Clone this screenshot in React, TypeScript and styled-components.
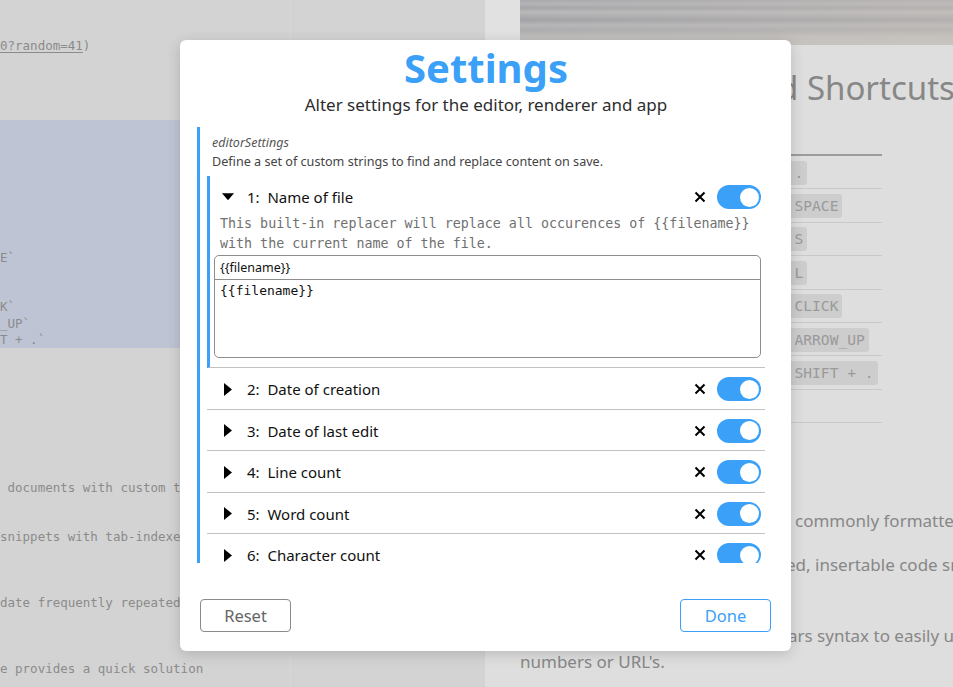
import React from "react";
import styled, { createGlobalStyle } from "styled-components";

const SANS = `"Noto Sans", "Open Sans", sans-serif`;
const MONO = `"DejaVu Sans Mono", "Liberation Mono", monospace`;
const BLUE = "#3aa0f8";

const GlobalStyle = createGlobalStyle`
  html, body { margin: 0; padding: 0; }
  body { font-family: ${SANS}; overflow: hidden; background: #d3d3d3; }
  * { box-sizing: border-box; }
`;

const Page = styled.div`
  position: relative;
  display: flex;
  width: 953px;
  height: 687px;
  overflow: hidden;
`;

/* ---------- left (editor) pane ---------- */
const LeftPane = styled.div`
  width: 485px;
  flex: none;
  padding-top: 37.5px;
  background:
    linear-gradient(to right, transparent 290px, #d7d7d7 290px, #d7d7d7 291px, transparent 291px),
    #d3d3d3;
  font-family: ${MONO};
  font-size: 12.5px;
  line-height: 16.5px;
  color: #8b8b8b;
  white-space: pre;
`;

const CodeLine = styled.div<{ $mt?: number }>`
  height: 16.5px;
  margin-top: ${(p) => p.$mt ?? 0}px;
`;

const Link = styled.span`
  text-decoration: underline;
  text-underline-offset: 2px;
`;

const Selection = styled.div`
  margin-top: 66px;
  height: 228px;
  padding-top: 129.5px;
  background: #bfc4d4;
`;

/* ---------- right (preview) pane ---------- */
const RightPane = styled.div`
  flex: 1;
  min-width: 0;
  background: #dedede;
  display: flex;
  flex-direction: column;
  overflow: hidden;
`;

const Banner = styled.div`
  height: 45px;
  display: flex;
  flex: none;
`;

const BannerGap = styled.div`
  width: 35px;
  background: #e1e1e1;
`;

const BannerImage = styled.div`
  flex: 1;
  background:
    linear-gradient(to right, rgba(255, 250, 240, 0) 0%, rgba(210, 200, 190, 0.35) 100%),
    linear-gradient(
      to bottom,
      #a9a9ac 0px,
      #b4b4b6 4px,
      #a5a5a9 8px,
      #b9b9ba 12px,
      #aeaeb1 16px,
      #a2a2a6 20px,
      #b6b6b7 25px,
      #acacaf 30px,
      #bebdbc 36px,
      #c3c2c0 45px
    );
`;

const Preview = styled.div`
  padding-left: 35px;
  color: #878787;
`;

const Heading = styled.h1`
  margin: 21px 0 0;
  font-family: ${SANS};
  font-weight: 400;
  font-size: 33px;
  line-height: 44px;
  white-space: nowrap;
  display: flex;
`;

const Lead = styled.span<{ $w: number }>`
  display: inline-block;
  flex: none;
  width: ${(p) => p.$w}px;
  overflow: hidden;
  white-space: nowrap;
`;

const KeyTable = styled.div`
  margin-top: 44px;
  width: 362px;
  border-top: 2px solid #9c9c9c;
`;

const KeyRow = styled.div`
  height: 33.4px;
  display: grid;
  grid-template-columns: 209px 1fr;
  align-items: center;
  border-bottom: 1px solid #c9c9c9;
  font-size: 15px;
  padding-top: 1px;
`;

const Kbd = styled.span`
  justify-self: start;
  height: 24px;
  line-height: 24px;
  padding: 0 4px;
  border-radius: 3px;
  background: #cdcdcd;
  color: #9a9a9a;
  font-family: ${MONO};
  font-size: 14.6px;
  white-space: pre;
`;

const Features = styled.div`
  margin-top: 85px;
  font-size: 17px;
  line-height: 26.5px;
  white-space: nowrap;
`;

const Feature = styled.div`
  margin-bottom: 17.5px;
`;

const FeatureLine = styled.div`
  display: flex;
`;

/* ---------- modal ---------- */
const Modal = styled.div`
  position: absolute;
  left: 180px;
  top: 40px;
  width: 611px;
  height: 611px;
  display: flex;
  flex-direction: column;
  padding: 0 16px 19px 17px;
  background: #fff;
  border-radius: 6px;
  box-shadow: 0 3px 14px rgba(0, 0, 0, 0.16);
  font-family: ${SANS};
`;

const Title = styled.h2`
  margin: 4px 0 0;
  text-align: center;
  font-size: 40px;
  line-height: 48px;
  font-weight: 700;
  color: ${BLUE};
`;

const Subtitle = styled.p`
  margin: 1px 0 10px;
  text-align: center;
  font-size: 17px;
  line-height: 24px;
  color: #2d2d2d;
`;

const ScrollArea = styled.div`
  flex: 1;
  min-height: 0;
  overflow: hidden;
  border-left: 3px solid ${BLUE};
  padding: 6px 10px 0 7px;
`;

const FieldName = styled.div`
  padding-left: 5px;
  font-size: 12.5px;
  line-height: 19px;
  font-style: italic;
  color: #555;
`;

const FieldDesc = styled.div`
  padding-left: 5px;
  font-size: 12.6px;
  line-height: 20px;
  color: #444;
  margin-bottom: 4px;
`;

const Item = styled.div<{ $open?: boolean }>`
  border-bottom: 1px solid #c2c2c2;
  border-left: ${(p) => (p.$open ? `3px solid ${BLUE}` : "none")};
  padding-left: ${(p) => (p.$open ? 0 : 3)}px;
`;

const ItemHeader = styled.div<{ $open?: boolean }>`
  display: flex;
  align-items: center;
  padding: 9px 4px ${(p) => (p.$open ? 5 : 7.5)}px 12px;
`;

const Caret = styled.span`
  width: 12px;
  height: 13px;
  display: flex;
  align-items: center;
  justify-content: center;
  margin-right: 13px;
`;

const ItemLabel = styled.span`
  flex: 1;
  font-size: 15px;
  color: #111;
  white-space: pre;
`;

const RemoveBtn = styled.span`
  width: 12px;
  height: 12px;
  display: flex;
  margin-right: 11px;
`;

const Toggle = styled.span<{ $on?: boolean }>`
  width: 44px;
  height: 24px;
  border-radius: 12px;
  background: ${(p) => (p.$on ? BLUE : "#ccc")};
  display: flex;
  align-items: center;
  justify-content: ${(p) => (p.$on ? "flex-end" : "flex-start")};
  padding: 0 2.5px;
`;

const Knob = styled.span`
  width: 19px;
  height: 19px;
  border-radius: 50%;
  background: #fff;
`;

const ItemBody = styled.div`
  padding: 0 4px 9px 4px;
`;

const ItemDesc = styled.div`
  padding-left: 6px;
  font-family: ${MONO};
  font-size: 13.33px;
  line-height: 20px;
  color: #707070;
`;

const Editor = styled.div`
  margin-top: 1px;
  height: 103px;
  border: 1px solid #8d8d8d;
  border-radius: 5px;
  display: flex;
  flex-direction: column;
`;

const FindInput = styled.div`
  height: 24px;
  line-height: 23px;
  padding-left: 5px;
  border-bottom: 1px solid #8d8d8d;
  font-size: 12.5px;
  color: #111;
`;

const ReplaceArea = styled.div`
  flex: 1;
  padding: 2px 5px;
  font-family: ${MONO};
  font-size: 13px;
  line-height: 17px;
  color: #111;
`;

const Footer = styled.div`
  margin-top: 36px;
  display: flex;
  justify-content: space-between;
  padding: 0 4px 0 3px;
`;

const Button = styled.button<{ $primary?: boolean }>`
  width: 91px;
  height: 33px;
  border-radius: 4px;
  background: #fff;
  border: 1px solid ${(p) => (p.$primary ? BLUE : "#8a8a8a")};
  color: ${(p) => (p.$primary ? BLUE : "#666")};
  font-family: ${SANS};
  font-size: 16.5px;
  padding: 0;
`;

const CaretIcon = ({ open }: { open?: boolean }) =>
  open ? (
    <svg width="13" height="8" viewBox="0 0 13 8">
      <path d="M0 0 L13 0 L6.5 7.5 Z" fill="#000" />
    </svg>
  ) : (
    <svg width="8" height="13" viewBox="0 0 8 13">
      <path d="M0 0 L8 6.5 L0 13 Z" fill="#000" />
    </svg>
  );

const CloseIcon = () => (
  <svg width="12" height="12" viewBox="0 0 12 12">
    <path d="M1.5 1.5 L10.5 10.5 M10.5 1.5 L1.5 10.5" stroke="#000" strokeWidth="2" />
  </svg>
);

const replacers = [
  "Name of file",
  "Date of creation",
  "Date of last edit",
  "Line count",
  "Word count",
  "Character count",
  "Reading time",
];

const keys = [
  ["Toggle preview", "CTRL + ."],
  ["Autocomplete", "CTRL + SPACE"],
  ["Save file", "CTRL + S"],
  ["Toggle line numbers", "CTRL + L"],
  ["Open link", "CTRL + CLICK"],
  ["Move line up", "CTRL + ARROW_UP"],
  ["Toggle sidebar", "CTRL + SHIFT + ."],
  ["Close dialog", "ESC"],
];

export default function App() {
  return (
    <>
      <GlobalStyle />
      <Page>
        <LeftPane>
          <CodeLine>
            <Link>0?random=41</Link>)
          </CodeLine>
          <Selection>
            <CodeLine>E`</CodeLine>
            <CodeLine />
            <CodeLine />
            <CodeLine>K`</CodeLine>
            <CodeLine>_UP`</CodeLine>
            <CodeLine>T + .`</CodeLine>
          </Selection>
          <CodeLine $mt={131.5}> documents with custom t</CodeLine>
          <CodeLine $mt={33}>snippets with tab-indexe</CodeLine>
          <CodeLine $mt={49.5}>date frequently repeated</CodeLine>
          <CodeLine $mt={49.5}>e provides a quick solution</CodeLine>
        </LeftPane>

        <RightPane>
          <Banner>
            <BannerGap />
            <BannerImage />
          </Banner>
          <Preview>
            <Heading>
              <Lead $w={258}>Keyboar</Lead>
              <span>d Shortcuts</span>
            </Heading>
            <KeyTable>
              {keys.map(([desc, key]) => (
                <KeyRow key={key}>
                  <span>{desc}</span>
                  <Kbd>{key}</Kbd>
                </KeyRow>
              ))}
            </KeyTable>
            <Features>
              <Feature>
                <FeatureLine>
                  <Lead $w={275}>Replace text in </Lead>
                  <span>commonly formatted text patterns</span>
                </FeatureLine>
              </Feature>
              <Feature>
                <FeatureLine>
                  <Lead $w={266}>Tab-index </Lead>
                  <span>ed, insertable code snippets</span>
                </FeatureLine>
                <FeatureLine>for templates.</FeatureLine>
              </Feature>
              <Feature>
                <FeatureLine>
                  <Lead $w={268}>Uses Handleb</Lead>
                  <span>ars syntax to easily update phone</span>
                </FeatureLine>
                <FeatureLine>numbers or URL's.</FeatureLine>
              </Feature>
            </Features>
          </Preview>
        </RightPane>

        <Modal>
          <Title>Settings</Title>
          <Subtitle>Alter settings for the editor, renderer and app</Subtitle>
          <ScrollArea>
            <FieldName>editorSettings</FieldName>
            <FieldDesc>Define a set of custom strings to find and replace content on save.</FieldDesc>
            {replacers.map((name, i) => {
              const open = i === 0;
              return (
                <Item key={name} $open={open}>
                  <ItemHeader $open={open}>
                    <Caret>
                      <CaretIcon open={open} />
                    </Caret>
                    <ItemLabel>{`${i + 1}:  ${name}`}</ItemLabel>
                    <RemoveBtn>
                      <CloseIcon />
                    </RemoveBtn>
                    <Toggle $on>
                      <Knob />
                    </Toggle>
                  </ItemHeader>
                  {open && (
                    <ItemBody>
                      <ItemDesc>
                        This built-in replacer will replace all occurences of {"{{filename}}"}
                        <br />
                        with the current name of the file.
                      </ItemDesc>
                      <Editor>
                        <FindInput>{"{{filename}}"}</FindInput>
                        <ReplaceArea>{"{{filename}}"}</ReplaceArea>
                      </Editor>
                    </ItemBody>
                  )}
                </Item>
              );
            })}
          </ScrollArea>
          <Footer>
            <Button>Reset</Button>
            <Button $primary>Done</Button>
          </Footer>
        </Modal>
      </Page>
    </>
  );
}
